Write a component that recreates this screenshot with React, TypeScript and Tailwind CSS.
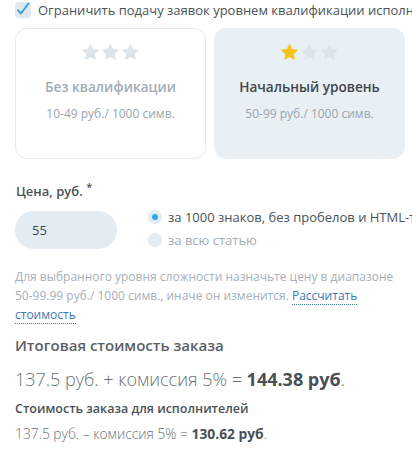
import React, { useState } from 'react';

const Star = ({ filled }: { filled: boolean }) => (
  <svg viewBox="0 0 24 24" className="h-[19px] w-[19px]">
    <path
      d="M12 2.2l2.9 6.1 6.6.8-4.9 4.6 1.3 6.6L12 17.1l-5.9 3.2 1.3-6.6-4.9-4.6 6.6-.8z"
      fill={filled ? '#f5c518' : '#dde4eb'}
      stroke={filled ? '#f5c518' : '#dde4eb'}
      strokeWidth="1.5"
      strokeLinejoin="round"
    />
  </svg>
);

const levels = [
  { id: 0, stars: 0, title: 'Без квалификации', price: '10-49 руб./ 1000 симв.' },
  { id: 1, stars: 1, title: 'Начальный уровень', price: '50-99 руб./ 1000 симв.' },
];

export default function App() {
  const [level, setLevel] = useState(1);
  const [per, setPer] = useState<'chars' | 'article'>('chars');
  const [price, setPrice] = useState('55');

  return (
    <div
      className="w-[412px] h-[455px] overflow-hidden bg-white text-[#4a5258]"
      style={{ fontFamily: '"Open Sans", "Noto Sans", sans-serif' }}
    >
      {/* Checkbox */}
      <div className="flex items-center pl-[15px] pt-[1px] h-[18px] whitespace-nowrap">
        <span className="flex h-[16px] w-[16px] shrink-0 items-center justify-center rounded-[4px] bg-[#dfe8ee]">
          <svg viewBox="0 0 16 16" className="h-[16px] w-[16px]">
            <path d="M3 8.2l3 3.3 7.5-10" fill="none" stroke="#3aa3dd" strokeWidth="2" strokeLinecap="round" strokeLinejoin="round" />
          </svg>
        </span>
        <span className="ml-[7px] text-[13px] leading-[18px]">
          Ограничить подачу заявок уровнем квалификации исполнителей
        </span>
      </div>

      {/* Level cards */}
      <div className="mt-[10px] flex gap-[8px] pl-[15px]">
        {levels.map((l) => {
          const active = level === l.id;
          return (
            <button
              key={l.id}
              onClick={() => setLevel(l.id)}
              className={`flex h-[131px] w-[191px] shrink-0 flex-col items-center rounded-[12px] pt-[14px] ${
                active ? 'bg-[#e8f0f6] border border-[#e8f0f6]' : 'bg-white border border-[#e5eaee]'
              }`}
            >
              <div className="flex gap-[1px]">
                {[0, 1, 2].map((i) => (
                  <Star key={i} filled={i < l.stars} />
                ))}
              </div>
              <div
                className={`mt-[15px] text-[13.6px] font-semibold leading-[20px] ${
                  active ? 'text-[#3f464c]' : 'text-[#a3acb5]'
                }`}
              >
                {l.title}
              </div>
              <div className="mt-[9px] text-[12px] leading-[16px] text-[#9aa4ad]">{l.price}</div>
            </button>
          );
        })}
      </div>

      {/* Price */}
      <div className="mt-[23px] pl-[16px] text-[13px] font-semibold leading-[18px] text-[#4a5258]">
        Цена, руб. <sup className="text-[11px]">*</sup>
      </div>
      <div className="mt-[11px] flex items-start pl-[15px]">
        <input
          value={price}
          onChange={(e) => setPrice(e.target.value)}
          className="h-[38px] w-[102px] rounded-full bg-[#e3ecf2] px-[17px] text-[13px] text-[#3f464c] outline-none"
        />
        <div className="-mt-[3px] ml-[31px] flex flex-col gap-[5px] whitespace-nowrap">
          <label className="flex cursor-pointer items-center" onClick={() => setPer('chars')}>
            <span className="flex h-[14px] w-[14px] items-center justify-center rounded-full bg-[#e3ecf2]">
              {per === 'chars' && <span className="h-[6px] w-[6px] rounded-full bg-[#36a6ea]" />}
            </span>
            <span className={`ml-[6px] text-[13px] leading-[18px] ${per === 'chars' ? 'text-[#4a5258]' : 'text-[#a3acb5]'}`}>
              за 1000 знаков, без пробелов и HTML-тегов
            </span>
          </label>
          <label className="flex cursor-pointer items-center" onClick={() => setPer('article')}>
            <span className="flex h-[14px] w-[14px] items-center justify-center rounded-full bg-[#e3ecf2]">
              {per === 'article' && <span className="h-[6px] w-[6px] rounded-full bg-[#36a6ea]" />}
            </span>
            <span className={`ml-[6px] text-[13px] leading-[18px] ${per === 'article' ? 'text-[#4a5258]' : 'text-[#a3acb5]'}`}>
              за всю статью
            </span>
          </label>
        </div>
      </div>

      {/* Hint */}
      <p className="mt-[18px] pl-[15px] pr-[6px] text-[12px] leading-[19px] text-[#a7b0b8]">
        Для выбранного уровня сложности назначьте цену в диапазоне{' '}
        <span className="whitespace-nowrap">50-99.99 руб./</span> 1000 симв., иначе он изменится.{' '}
        <a className="cursor-pointer text-[#3b7bb0] border-b border-dotted border-[#3b7bb0]">Рассчитать стоимость</a>
      </p>

      {/* Totals */}
      <div className="mt-[10px] pl-[15px] text-[15px] font-semibold leading-[22px] text-[#5a6166]">
        Итоговая стоимость заказа
      </div>
      <div className="mt-[11px] pl-[15px] text-[18px] font-light leading-[24px] text-[#6a7177]">
        137.5 руб. + комиссия 5% = <b className="font-bold text-[#4a5056]">144.38 руб</b>.
      </div>
      <div className="mt-[9px] pl-[15px] text-[12.5px] font-semibold leading-[18px] text-[#4a5258]">
        Стоимость заказа для исполнителей
      </div>
      <div className="mt-[7px] pl-[15px] text-[13.8px] font-light leading-[18px] text-[#6a7177]">
        137.5 руб. – комиссия 5% = <b className="font-bold text-[#4a5056]">130.62 руб</b>.
      </div>
    </div>
  );
}
